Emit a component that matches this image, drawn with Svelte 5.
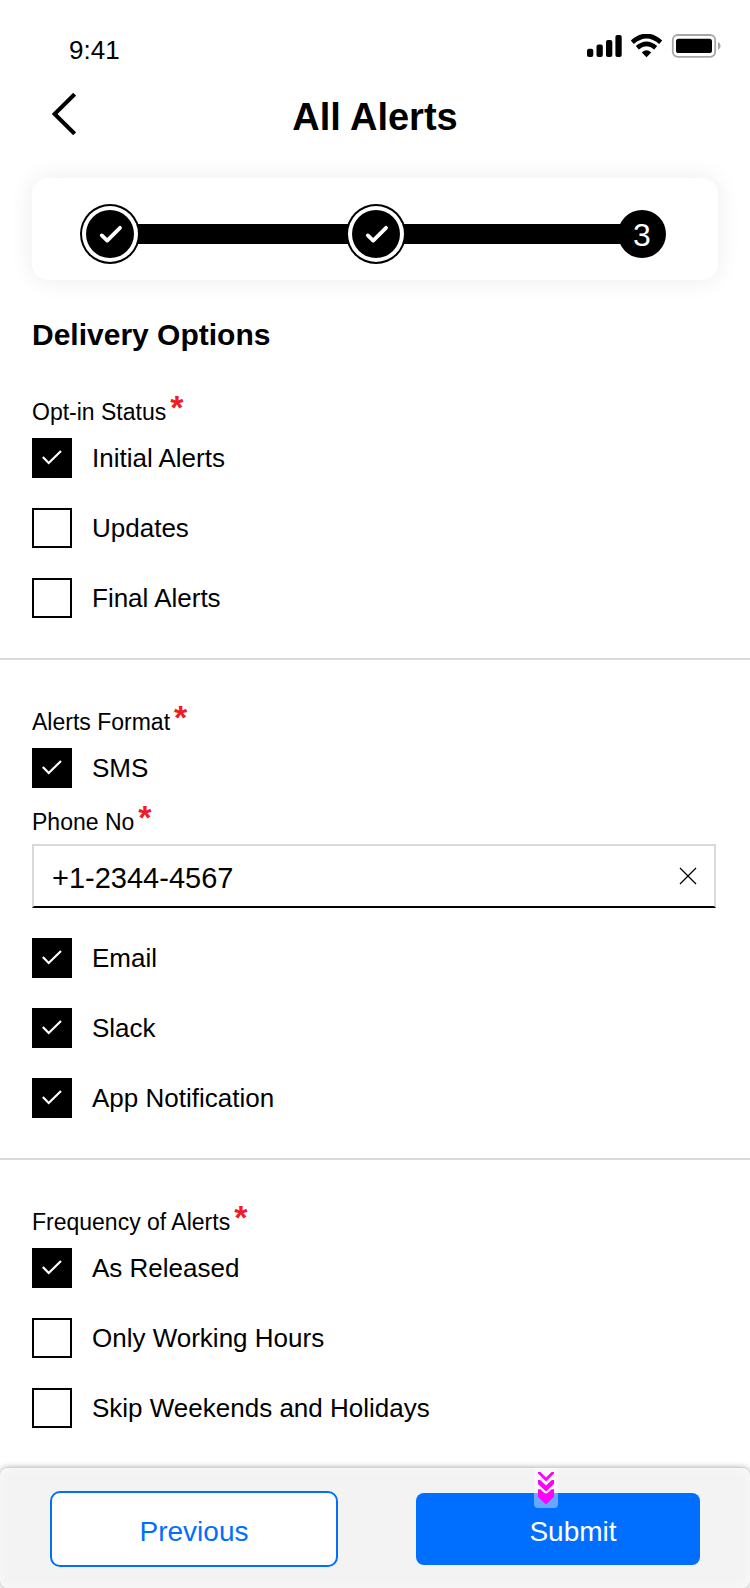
<script>
  let phone = $state('+1-2344-4567');

  let optIn = $state([
    { id: 'initial', label: 'Initial Alerts', checked: true },
    { id: 'updates', label: 'Updates', checked: false },
    { id: 'final', label: 'Final Alerts', checked: false }
  ]);

  let sms = $state([{ id: 'sms', label: 'SMS', checked: true }]);

  let channels = $state([
    { id: 'email', label: 'Email', checked: true },
    { id: 'slack', label: 'Slack', checked: true },
    { id: 'app', label: 'App Notification', checked: true }
  ]);

  let frequency = $state([
    { id: 'released', label: 'As Released', checked: true },
    { id: 'working', label: 'Only Working Hours', checked: false },
    { id: 'skip', label: 'Skip Weekends and Holidays', checked: false }
  ]);
</script>

{#snippet options(items)}
  <div class="options">
    {#each items as item (item.id)}
      <label class="option" for={item.id}>
        <span class="box">
          <input id={item.id} type="checkbox" bind:checked={item.checked} />
          {#if item.checked}
            <svg viewBox="0 0 40 40" aria-hidden="true">
              <path d="M10.8 19 L16.7 25 L29 13" fill="none" stroke="#fff" stroke-width="2.2" />
            </svg>
          {/if}
        </span>
        <span>{item.label}</span>
      </label>
    {/each}
  </div>
{/snippet}

{#snippet doneStep()}
  <li class="step done">
    <svg viewBox="0 0 48 48" aria-hidden="true">
      <path d="M15.8 25.4 L21.2 30.6 L34 17.8" fill="none" stroke="#fff" stroke-width="3.8" stroke-linecap="round" stroke-linejoin="round" />
    </svg>
  </li>
{/snippet}

<div class="page">
  <div class="status">
    <span class="time">9:41</span>
    <svg width="134" height="24" viewBox="0 0 134 24" aria-hidden="true">
      <rect x="0" y="14.7" width="6.3" height="8.3" rx="2" />
      <rect x="9.5" y="10.5" width="6.3" height="12.5" rx="2" />
      <rect x="19" y="6" width="6.3" height="17" rx="2" />
      <rect x="28.4" y="1" width="6.3" height="22" rx="2" />
      <path d="M45.3 8.2 Q59.5 -4.2 73.7 8.2" fill="none" stroke="#000" stroke-width="4.6" />
      <path d="M50.3 13.8 Q59.5 6 68.7 13.8" fill="none" stroke="#000" stroke-width="4.6" />
      <path d="M54.8 18.4 Q59.5 14 64.2 18.4 L59.5 23.2 Z" />
      <rect x="85.8" y="1" width="42.4" height="21.8" rx="5" fill="none" stroke="#a6a6a6" stroke-width="1.8" />
      <rect x="89" y="4.7" width="36" height="14.4" rx="2.6" />
      <path d="M131 8 Q133.6 9.2 133.6 12 Q133.6 14.8 131 16 Z" fill="#a6a6a6" />
    </svg>
  </div>

  <header>
    <button class="back" type="button" aria-label="Back">
      <svg width="24" height="42" viewBox="0 0 24 42" aria-hidden="true">
        <path d="M22.6 1.2 L2.6 21 L22.6 40.8" fill="none" stroke="#000" stroke-width="4" />
      </svg>
    </button>
    <h1>All Alerts</h1>
  </header>

  <ol class="steps">
    {@render doneStep()}
    <li class="line" aria-hidden="true"></li>
    {@render doneStep()}
    <li class="line" aria-hidden="true"></li>
    <li class="step" aria-current="step">3</li>
  </ol>

  <form onsubmit={(e) => e.preventDefault()}>
    <h2>Delivery Options</h2>

    <fieldset class="first">
      <legend class="caption">Opt-in Status<span class="star">*</span></legend>
      {@render options(optIn)}
    </fieldset>

    <fieldset>
      <legend class="caption">Alerts Format<span class="star">*</span></legend>
      {@render options(sms)}
      <div class="phone">
        <label class="caption" for="phone">Phone No<span class="star">*</span></label>
        <div class="field">
          <input id="phone" type="tel" bind:value={phone} />
          <button type="button" aria-label="Clear" onclick={() => (phone = '')}>
            <svg width="18" height="18" viewBox="0 0 18 18" aria-hidden="true">
              <path d="M1 1 L17 17 M17 1 L1 17" stroke="#000" stroke-width="1.3" />
            </svg>
          </button>
        </div>
      </div>
      {@render options(channels)}
    </fieldset>

    <fieldset class="last">
      <legend class="caption">Frequency of Alerts<span class="star">*</span></legend>
      {@render options(frequency)}
    </fieldset>

    <footer>
      <button class="previous" type="button">Previous</button>
      <button class="submit" type="submit">
        Submit
        <svg class="hint" width="24" height="40" viewBox="0 0 24 40" aria-hidden="true">
          <rect width="24" height="40" rx="4" fill="#fff" fill-opacity="0.4" />
          <path d="M4 4 H6.4 L12 9.4 L17.6 4 H20 V5.6 L12 13.4 L4 5.6 Z" fill="#f0f" />
          <path d="M4 12 H6.2 L12 17.6 L17.8 12 H20 V16 L12 23.6 L4 16 Z" fill="#f0f" />
          <path d="M4 21.2 H6.4 L12 26.4 L17.6 21.2 H20 V28.8 L12 36.4 L4 28.8 Z" fill="#f0f" />
        </svg>
      </button>
    </footer>
  </form>
</div>

<style>
  :global(body) {
    margin: 0;
    background: #fff;
  }

  .page {
    color: #000;
    font-family: 'Liberation Sans', Arial, Helvetica, sans-serif;
  }

  button,
  input {
    font: inherit;
    color: inherit;
    margin: 0;
    padding: 0;
    border: 0;
    background: none;
    box-sizing: border-box;
  }

  svg {
    display: block;
  }

  .status {
    display: flex;
    justify-content: space-between;
    align-items: flex-start;
    padding: 34px 29px 0 69px;
  }

  .time {
    font-size: 26px;
    line-height: 32px;
  }

  header {
    display: grid;
    grid-template-columns: 1fr auto 1fr;
    align-items: start;
    padding: 27px 52px 0;
  }

  .back {
    justify-self: start;
  }

  h1 {
    margin: 0;
    font-size: 38px;
    line-height: 48px;
  }

  .steps {
    display: flex;
    align-items: center;
    margin: 37px 32px 0;
    padding: 32px 52px 22px 54px;
    list-style: none;
    border-radius: 16px;
    background: #fff;
    box-shadow: 0 0 24px rgba(0, 0, 0, 0.08);
  }

  .step {
    position: relative;
    width: 48px;
    height: 48px;
    border-radius: 50%;
    background: #000;
    color: #fff;
    font-size: 32px;
    line-height: 50px;
    text-align: center;
  }

  .done {
    box-shadow: 0 0 0 4px #fff, 0 0 0 6px #000;
  }

  .line {
    flex: 1;
    height: 20px;
    margin: 0 -4px;
    background: #000;
  }

  h2 {
    margin: 37px 32px 0;
    font-size: 30px;
    line-height: 36px;
  }

  fieldset {
    min-width: 0;
    margin: 0;
    padding: 48px 32px 40px;
    border: 0;
    border-bottom: 2px solid #d8dada;
  }

  .first {
    padding-top: 45px;
  }

  .last {
    border-bottom: 0;
  }

  .caption {
    display: flex;
    align-items: flex-start;
    gap: 4px;
    padding: 0;
    font-size: 23px;
    line-height: 28px;
  }

  legend {
    float: left;
    width: 100%;
    margin-bottom: 12px;
  }

  .star {
    color: #f01c24;
    font-size: 34px;
    line-height: 18px;
    font-weight: bold;
  }

  .options {
    clear: both;
    display: flex;
    flex-direction: column;
    align-items: flex-start;
    gap: 30px;
  }

  .option {
    display: flex;
    align-items: center;
    gap: 20px;
    font-size: 26px;
    line-height: 36px;
  }

  .box {
    display: grid;
    width: 40px;
    height: 40px;
  }

  .box > :global(*) {
    grid-area: 1 / 1;
  }

  .box input {
    appearance: none;
    border: 2px solid #000;
    background: #fff;
  }

  .box input:checked {
    background: #000;
  }

  .box svg {
    pointer-events: none;
  }

  .phone {
    padding: 20px 2px 30px 0;
  }

  .field {
    display: flex;
    align-items: center;
    height: 64px;
    margin-top: 8px;
    padding: 0 17px 0 18px;
    box-sizing: border-box;
    border: 2px solid #d8dada;
    border-bottom-color: #000;
  }

  .field input {
    flex: 1;
    min-width: 0;
    height: 36px;
    padding-top: 4px;
    font-size: 29px;
    outline: 0;
  }

  footer {
    display: grid;
    grid-template-columns: 288fr 284fr;
    align-items: center;
    gap: 78px;
    padding: 23px 50px 21px;
    border-radius: 8px;
    background: #f3f3f3;
    box-shadow: 0 0 6px rgba(0, 0, 0, 0.4), inset 0 0 10px #fafafa;
    font-size: 28px;
  }

  .previous {
    height: 76px;
    padding-top: 6px;
    border: 2px solid #006fff;
    border-radius: 10px;
    background: #fff;
    color: #006fff;
  }

  .submit {
    position: relative;
    height: 72px;
    padding: 6px 0 0 30px;
    border-radius: 8px;
    background: #006fff;
    color: #fff;
  }

  .hint {
    position: absolute;
    top: -25px;
    left: 118px;
  }
</style>
